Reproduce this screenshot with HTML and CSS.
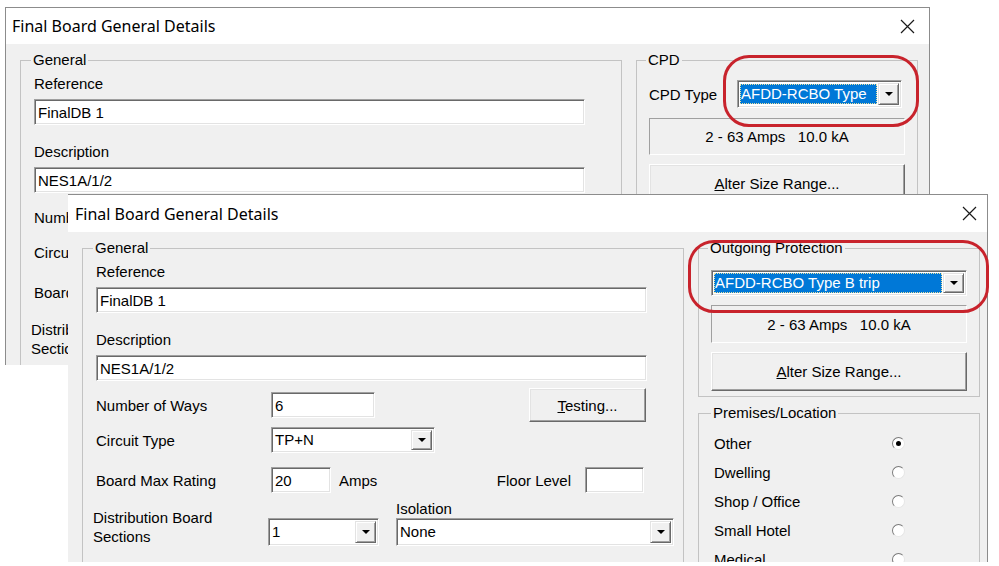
FILE: index.html
```html
<!DOCTYPE html>
<html lang="en">
<head>
  <meta charset="UTF-8" />
  <title>Final Board General Details</title>
  <link rel="stylesheet" href="styles.css">
</head>
<body>

  <!-- older dialog, partly covered -->
  <div class="window win-old">
    <div class="titlebar">
      <span>Final Board General Details</span>
      <svg class="close" width="15" height="15" viewBox="0 0 15 15"><path d="M1 1L14 14M14 1L1 14" stroke="#1a1a1a" stroke-width="1.2" fill="none"/></svg>
    </div>
    <div class="dlg-body">
      <fieldset class="group general">
        <legend>General</legend>
        <div class="field-label">Reference</div>
        <div class="textbox wide">FinalDB 1</div>
        <div class="field-label desc-label">Description</div>
        <div class="textbox wide">NES1A/1/2</div>
        <div class="row row-ways">
          <span class="row-label">Number of Ways</span>
          <div class="textbox w-ways">6</div>
          <div class="button btn-testing"><span><u>T</u>esting...</span></div>
        </div>
        <div class="row row-circuit">
          <span class="row-label">Circuit Type</span>
          <div class="combo w-circuit"><span class="combo-text">TP+N</span><span class="drop"><i></i></span></div>
        </div>
        <div class="row row-rating">
          <span class="row-label">Board Max Rating</span>
          <div class="textbox w-rating">20</div>
          <span class="unit">Amps</span>
          <span class="floor-label">Floor Level</span>
          <div class="textbox w-floor"></div>
        </div>
        <div class="row row-sections">
          <span class="row-label two-line">Distribution Board<br>Sections</span>
          <div class="combo w-sections"><span class="combo-text">1</span><span class="drop"><i></i></span></div>
          <div class="iso">
            <div class="iso-label">Isolation</div>
            <div class="combo w-iso"><span class="combo-text">None</span><span class="drop"><i></i></span></div>
          </div>
        </div>
      </fieldset>

      <div class="side">
        <fieldset class="group prot">
          <legend>CPD</legend>
          <div class="cpd-row">
            <span>CPD Type</span>
            <div class="combo focused w-cpd"><span class="combo-text">AFDD-RCBO Type</span><span class="drop"><i></i></span></div>
          </div>
          <div class="infobox cpd-info">2 - 63 Amps   10.0 kA</div>
          <div class="button btn-range"><span><u>A</u>lter Size Range...</span></div>
        </fieldset>
      </div>
    </div>
  </div>

  <!-- newer dialog on top -->
  <div class="window win-new">
    <div class="titlebar">
      <span>Final Board General Details</span>
      <svg class="close" width="15" height="15" viewBox="0 0 15 15"><path d="M1 1L14 14M14 1L1 14" stroke="#1a1a1a" stroke-width="1.2" fill="none"/></svg>
    </div>
    <div class="dlg-body">
      <fieldset class="group general">
        <legend>General</legend>
        <div class="field-label">Reference</div>
        <div class="textbox wide">FinalDB 1</div>
        <div class="field-label desc-label">Description</div>
        <div class="textbox wide">NES1A/1/2</div>
        <div class="row row-ways">
          <span class="row-label">Number of Ways</span>
          <div class="textbox w-ways">6</div>
          <div class="button btn-testing"><span><u>T</u>esting...</span></div>
        </div>
        <div class="row row-circuit">
          <span class="row-label">Circuit Type</span>
          <div class="combo w-circuit"><span class="combo-text">TP+N</span><span class="drop"><i></i></span></div>
        </div>
        <div class="row row-rating">
          <span class="row-label">Board Max Rating</span>
          <div class="textbox w-rating">20</div>
          <span class="unit">Amps</span>
          <span class="floor-label">Floor Level</span>
          <div class="textbox w-floor"></div>
        </div>
        <div class="row row-sections">
          <span class="row-label two-line">Distribution Board<br>Sections</span>
          <div class="combo w-sections"><span class="combo-text">1</span><span class="drop"><i></i></span></div>
          <div class="iso">
            <div class="iso-label">Isolation</div>
            <div class="combo w-iso"><span class="combo-text">None</span><span class="drop"><i></i></span></div>
          </div>
        </div>
      </fieldset>

      <div class="side">
        <fieldset class="group prot">
          <legend>Outgoing Protection</legend>
          <div class="combo focused w-out"><span class="combo-text">AFDD-RCBO Type B trip</span><span class="drop"><i></i></span></div>
          <div class="infobox out-info">2 - 63 Amps   10.0 kA</div>
          <div class="button btn-range"><span><u>A</u>lter Size Range...</span></div>
        </fieldset>

        <fieldset class="group premises">
          <legend>Premises/Location</legend>
          <div class="opt"><span class="opt-label">Other</span><span class="radio on"></span></div>
          <div class="opt"><span class="opt-label">Dwelling</span><span class="radio"></span></div>
          <div class="opt"><span class="opt-label">Shop / Office</span><span class="radio"></span></div>
          <div class="opt"><span class="opt-label">Small Hotel</span><span class="radio"></span></div>
          <div class="opt"><span class="opt-label">Medical</span><span class="radio"></span></div>
        </fieldset>
      </div>
    </div>
  </div>

  <!-- red markup rings drawn over the screenshots -->
  <div class="markup mark-cpd"></div>
  <div class="markup mark-out"></div>

</body>
</html>
```

FILE: styles.css
```css
* { box-sizing: border-box; }

body {
  margin: 0;
  width: 999px;
  height: 566px;
  position: relative;
  overflow: hidden;
  background: #ffffff;
  font-family: "Liberation Sans", Arial, sans-serif;
  font-size: 15px;
  color: #000;
}

/* windows */
.window {
  position: absolute;
  background: #f0f0f0;
  border: 1px solid #8c8c8c;
  border-bottom: 0;
  overflow: hidden;
}
.win-old { left: 5px; top: 7px; width: 925px; height: 358px; }
.win-new { left: 68px; top: 194px; width: 920px; height: 368px; border-left: 0; }

.titlebar {
  display: flex; align-items: center; justify-content: space-between;
  height: 36px; padding: 0 14px 0 6px;
  background: #fff;
  font-family: "Noto Sans", sans-serif; font-size: 16px;
}
.win-new .titlebar { height: 37px; padding: 0 10px 0 7px; }
.close { display: block; }

.dlg-body {
  display: flex; align-items: flex-start; gap: 14px;
  padding: 7px 0 0 14px;
}

/* group boxes */
.group {
  margin: 0; min-width: 0;
  border: 1px solid #c3c3c3;
}
.group legend { padding: 0 2px; margin-left: -3px; line-height: 18px; }

.general { width: 602px; height: 420px; padding: 0 36px 0 13px; flex-shrink: 0; }
.field-label { line-height: 18px; margin: 6px 0; }
.desc-label { margin-top: 18px; }
.textbox.wide { width: 551px; }

/* sunken edit boxes */
.textbox, .combo {
  height: 26px;
  background: #fff;
  border: 1px solid; border-color: #a0a0a0 #fff #fff #a0a0a0;
  box-shadow: inset 1px 1px 0 #696969, inset -1px -1px 0 #e3e3e3;
  display: flex; align-items: center;
  padding-left: 3px;
  white-space: nowrap; overflow: hidden;
  flex-shrink: 0;
}
.combo { padding: 2px; }
.combo-text { flex: 1; padding-left: 1px; line-height: 20px; overflow: hidden; }
.combo.focused .combo-text {
  background: #0078d7; color: #fff;
  outline: 1px dotted #e8e0a0; outline-offset: -1px;
  margin-right: 1px;
}
.drop {
  width: 21px; height: 100%;
  background: #f0f0f0;
  border: 1px solid; border-color: #e3e3e3 #696969 #696969 #e3e3e3;
  box-shadow: inset 1px 1px 0 #fff, inset -1px -1px 0 #a0a0a0;
  display: flex; align-items: center; justify-content: center;
}
.drop i {
  width: 0; height: 0;
  border-left: 4px solid transparent; border-right: 4px solid transparent;
  border-top: 4px solid #000;
}

/* raised buttons */
.button {
  background: #f0f0f0;
  border: 1px solid; border-color: #fff #696969 #696969 #fff;
  box-shadow: inset -1px -1px 0 #a0a0a0, inset 1px 1px 0 #e3e3e3;
  display: flex; align-items: center; justify-content: center;
  flex-shrink: 0;
}

/* form rows */
.row { display: flex; align-items: center; }
.row-label { width: 175px; flex-shrink: 0; }
.row-ways { margin-top: 7px; }
.row-circuit { margin-top: 5px; }
.row-rating { margin-top: 14px; }
.row-sections { margin-top: 7px; align-items: flex-end; }

.w-ways { width: 104px; }
.btn-testing { width: 117px; height: 34px; margin-left: auto; margin-right: 1px; }
.w-circuit { width: 164px; }
.w-rating { width: 60px; }
.unit { margin-left: 8px; }
.floor-label { margin-left: auto; }
.w-floor { width: 59px; margin-left: 14px; margin-right: 3px; }
.two-line { margin-left: -3px; line-height: 19px; }
.w-sections { width: 111px; height: 28px; }
.iso { margin-left: 17px; }
.iso-label { line-height: 18px; }
.w-iso { width: 278px; height: 28px; }

/* right hand column */
.side { width: 282px; flex-shrink: 0; display: flex; flex-direction: column; gap: 7px; }
.prot { padding: 0 12px 5px; }
.cpd-row { display: flex; align-items: center; margin-top: 11px; }
.w-cpd { width: 165px; height: 28px; margin-left: auto; margin-right: 3px; }
.w-out { width: 256px; margin-top: 13px; }

.infobox {
  height: 38px; margin-top: 9px;
  border: 1px solid; border-color: #a0a0a0 #fff #fff #a0a0a0;
  display: flex; align-items: center; justify-content: center;
  white-space: pre;
}
.cpd-info { height: 37px; margin-top: 10px; }
.btn-range { height: 39px; margin-top: 9px; }

.premises { height: 200px; padding: 7px 0 0 15px; }
.opt { display: flex; align-items: center; height: 29px; }
.opt-label { width: 178px; }
.radio {
  width: 13px; height: 13px; border-radius: 50%;
  background: #fff;
  border: 1px solid; border-color: #7a7a7a #e6e6e6 #e6e6e6 #7a7a7a;
  display: flex; align-items: center; justify-content: center;
}
.radio.on::after {
  content: ""; width: 5px; height: 5px; border-radius: 50%; background: #000;
}

/* red annotation rings */
.markup {
  position: absolute;
  border: 3px solid #c8232c;
  border-radius: 26px;
}
.mark-cpd { left: 723px; top: 55px; width: 196px; height: 72px; }
.mark-out { left: 688px; top: 240px; width: 301px; height: 73px; }
```
